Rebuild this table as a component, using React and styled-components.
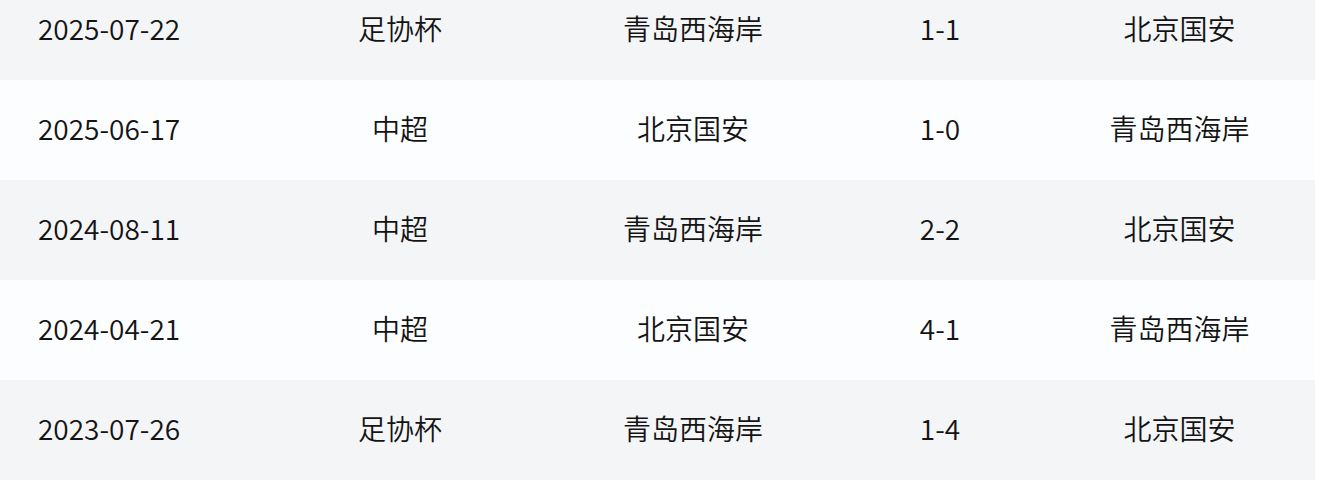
import React from 'react'
import styled, { createGlobalStyle } from 'styled-components';

const GlobalStyle = createGlobalStyle`
    html, body {
        margin : 0;
        padding : 0;
        background : #ffffff;
        overflow : hidden;
    }
    body {
        font-family : "Noto Sans CJK SC", "Noto Sans", sans-serif;
    }
`;

const Page = styled.div`
    width : 1320px;
    height : 482px;
    overflow : hidden;
`;

const Table = styled.div`
    width : 1315px;
    margin-top : -20px;
    display : flex;
    flex-direction : column;
`;

const Row = styled.div`
    display : grid;
    grid-template-columns : 250px 300px 286px 208px 271px;
    height : 100px;
    align-items : center;
    background : ${props => props.$striped ? '#f4f5f7' : '#fcfdfe'};
`;

const Cell = styled.div`
    font-size : 28px;
    font-weight : 350;
    color : #141414;
    text-align : ${props => props.$left ? 'left' : 'center'};
    padding-left : ${props => props.$left ? '38px' : '0'};
    padding-bottom : 4px;
    white-space : nowrap;
`;

const matches = [
    { date : '2025-07-22', cup : '足协杯', home : '青岛西海岸', score : '1-1', away : '北京国安' },
    { date : '2025-06-17', cup : '中超', home : '北京国安', score : '1-0', away : '青岛西海岸' },
    { date : '2024-08-11', cup : '中超', home : '青岛西海岸', score : '2-2', away : '北京国安' },
    { date : '2024-04-21', cup : '中超', home : '北京国安', score : '4-1', away : '青岛西海岸' },
    { date : '2023-07-26', cup : '足协杯', home : '青岛西海岸', score : '1-4', away : '北京国安' },
];

const App = () => {
    return (
        <Page>
            <GlobalStyle />
            <Table>
                {matches.map((m, i) => (
                    <Row key={m.date} $striped={i % 2 === 0}>
                        <Cell $left>{m.date}</Cell>
                        <Cell>{m.cup}</Cell>
                        <Cell>{m.home}</Cell>
                        <Cell>{m.score}</Cell>
                        <Cell>{m.away}</Cell>
                    </Row>
                ))}
            </Table>
        </Page>
    )
}

export default App
